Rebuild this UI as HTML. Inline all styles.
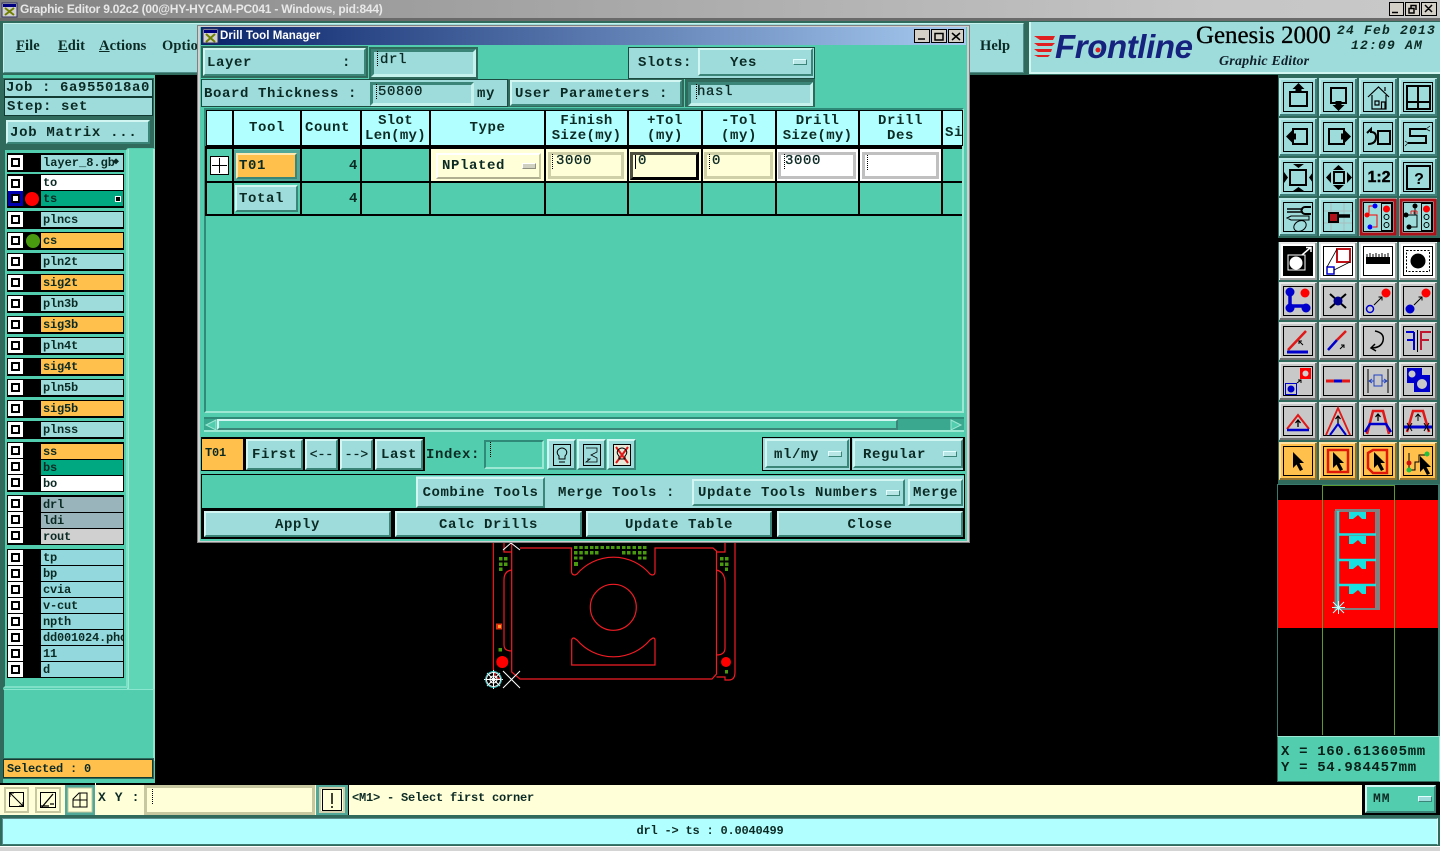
<!DOCTYPE html>
<html><head><meta charset="utf-8"><title>Graphic Editor</title>
<style>
html,body{margin:0;padding:0;width:1440px;height:851px;overflow:hidden;background:#000}
body{position:relative;font:bold 14px/1 "Liberation Mono",monospace;color:#0c2a24;letter-spacing:.6px}
div,span.a{position:absolute;box-sizing:border-box;white-space:pre}
.t{line-height:1}
.b{background:#9edcdc;border:2px solid;border-color:#d2f6f2 #3b8578 #3b8578 #d2f6f2;text-align:center}
.f{border:3px solid;border-color:#3b8578 #c6f2ee #c6f2ee #3b8578;background:#9edcdc;font-weight:normal;-webkit-text-stroke:.3px #0c2a24}
.p{background:#9edcdc;border:1px solid #1c4a40}
.l{background:#9edcdc;font-size:12px;letter-spacing:-.2px;height:15px;line-height:17px;left:41px;width:82px;padding-left:2px;overflow:hidden}
.o{background:#ffc04c}
.k{background:#000}
.ck{left:8px;width:15px;height:15px;background:#fff;border:3px solid #fff}
.ck:after{content:"";position:absolute;left:0;top:0;width:9px;height:9px;box-sizing:border-box;border:2px solid #000;background:#fff}
.m{width:14px;height:6px;background:#b8e6e6;border:1px solid;border-color:#e4ffff #3b8578 #3b8578 #e4ffff}
.c{width:1px;height:15px;border-left:1px dotted #000}
.h{background:#b2ffff;text-align:center;font-size:14px;line-height:15px;top:111px;height:34px;padding-top:3px}
.v{background:#000;width:2px}
.e{background:#ffffd8;border:3px solid #d0d0a8;padding-left:5px;line-height:12px;font-weight:normal;-webkit-text-stroke:.3px #0c2a24}
.mn{font:bold 14.5px/15px 'Liberation Serif',serif;letter-spacing:.1px;top:39px}
</style></head><body>

<!-- canvas board -->
<svg style="position:absolute;left:0;top:0" width="1440" height="851" viewBox="0 0 1440 851">
<g fill="none" stroke="#f01c24" stroke-width="1.200">
<path d="M520 548H571.5V572Q572 575 575 575L577 574A48 48 0 0 1 650 574L652 575Q655 575 655 572V548H713L716.5 551V674L712 679H520L511.7 672V543"/>
<path d="M511.7 570Q504 571 504 580V645Q504 651 511.7 651"/>
<path d="M716.5 570Q725 572 725 583V648Q725 655 716.5 655"/>
<path d="M493.3 543V668Q494 677 500 679"/>
<path d="M735 543V672Q735 680 729 680H725V677H716.5"/>
<path d="M504 543V552H511.7M725 543V552H716.5"/>
<circle cx="613.3" cy="607.3" r="23"/>
<path d="M571.7 665V640Q572 638 574 638L577 640A48 48 0 0 0 650 640L653 638Q655 638 655 640V665Z"/>
</g>
<circle cx="502.3" cy="662" r="6" fill="#f00"/><circle cx="726" cy="662" r="5" fill="#f00"/>
<rect x="496" y="623.500" width="6" height="6" fill="#e03010"/><rect x="498" y="625" width="3" height="3" fill="#ffa030"/>
<g fill="#4a9a10">
<path d="M574 546h3.500v3h-3.500zM579.300 546h3.500v3h-3.500zM584.600 546h3.500v3h-3.500zM590 546h3.500v3h-3.500zM595 546h3.500v3h-3.500zM600.500 546h3.500v3h-3.500zM606 546h3.500v3h-3.500zM611 546h3.500v3h-3.500zM616.500 546h3.500v3h-3.500zM622 546h3.500v3h-3.500zM627 546h3.500v3h-3.500zM632.500 546h3.500v3h-3.500zM638 546h3.500v3h-3.500zM643 546h3.500v3h-3.500z"/>
<path d="M574 551h3.500v3.500h-3.500zM579.300 551h3.500v3.500h-3.500zM584.600 551h3.500v3.500h-3.500zM590 551h3.500v3.500h-3.500zM595 551h3.500v3.500h-3.500zM622 551h3.500v3.500h-3.500zM627 551h3.500v3.500h-3.500zM632.500 551h3.500v3.500h-3.500zM638 551h3.500v3.500h-3.500zM643 551h3.500v3.500h-3.500z"/>
<path d="M574 556.500h3.500v3h-3.500zM579.300 556.500h3.500v3h-3.500zM638 556.500h3.500v3h-3.500zM643 556.500h3.500v3h-3.500zM574 562h4v4h-4z"/>
<path d="M499 557h3.500v3.500h-3.500zM504 557h3.500v3.500h-3.500zM499 562.500h3.500v3.500h-3.500zM504 562.500h3.500v3.500h-3.500zM499 567.500h3.500v3.500h-3.500zM498.500 648h3.500v3.500h-3.500z"/>
<path d="M720 557h3.500v3.500h-3.500zM725 557h3.500v3.500h-3.500zM720 562.500h3.500v3.500h-3.500zM725 562.500h3.500v3.500h-3.500zM725 567.500h3v3.500h-3zM725 670h3v3.500h-3z"/>
</g>
<g stroke="#fff" stroke-width="1" fill="none">
<circle cx="493.500" cy="679.500" r="7"/><circle cx="493.500" cy="679.500" r="3.500"/>
<path d="M484 679.500H503M493.500 670V689M487 673L500 686M500 673L487 686"/>
<path d="M503 671L520 688M520 671L503 688"/>
<path d="M503 550L511 543L520 550"/>
</g>
<circle cx="493.500" cy="679.500" r="8" fill="none" stroke="#30e0e0" stroke-width=".7"/>
</svg>

<!-- title bar -->
<div style="left:0;top:0;width:1440px;height:18px;background:linear-gradient(90deg,#808080,#9c9c9c 25%,#c6c6c6 85%,#c8c8c8)"></div>
<div style="left:0;top:18px;width:1440px;height:3px;background:#6a6a6a"></div>
<div style="left:20px;top:2px;font:bold 12px/14px 'Liberation Sans',sans-serif;letter-spacing:-.23px;color:#e8e8e8">Graphic Editor 9.02c2 (00@HY-HYCAM-PC041 - Windows, pid:844)</div>

<!-- menu bar -->
<div style="left:0;top:21px;width:1440px;height:54px;background:#2f6a5c"></div>
<div style="left:3px;top:23px;width:1021px;height:50px;background:#9edcdc;border:1px solid;border-color:#c6f2ee #4f8d88 #4f8d88 #c6f2ee"></div>
<div style="left:1029px;top:22px;width:411px;height:52px;background:#9edcdc;border-bottom:2px solid #d2f6f2;border-left:2px solid #d2f6f2"></div>
<div class="mn" style="left:16px"><u>F</u>ile</div>
<div class="mn" style="left:58px"><u>E</u>dit</div>
<div class="mn" style="left:99px"><u>A</u>ctions</div>
<div class="mn" style="left:162px">Optio</div>
<div class="mn" style="left:980px">Help</div>
<div style="left:1055px;top:27px;font:italic bold 33px/40px 'Liberation Sans',sans-serif;letter-spacing:-.4px;color:#16237e">Frontline</div>
<div style="left:1196px;top:22px;font:25px/28px 'Liberation Serif',serif;letter-spacing:-.05px;color:#000;-webkit-text-stroke:.3px #000">Genesis 2000</div>
<div style="left:1219px;top:54px;font:italic bold 14px/16px 'Liberation Serif',serif;letter-spacing:.2px;color:#10202a">Graphic Editor</div>
<div style="left:1337px;top:24px;font:italic bold 13px/14px 'Liberation Mono',monospace;letter-spacing:1.2px;color:#0c2a24">24 Feb 2013</div>
<div style="left:1351px;top:39px;font:italic bold 13px/14px 'Liberation Mono',monospace;letter-spacing:1.2px;color:#0c2a24">12:09 AM</div>

<!-- left panel -->
<div style="left:0;top:75px;width:155px;height:708px;background:#52cdae;border-left:3px solid #2f6a5c"></div>
<div style="left:3px;top:78px;width:151px;height:70px;background:#2f6a5c"></div>
<div style="left:4px;top:79px;width:149px;height:18px;background:#9edcdc;border:1px solid #123a32;padding-left:1px;line-height:17px">Job : 6a955018a0</div>
<div style="left:4px;top:97px;width:149px;height:19px;background:#9edcdc;border:1px solid #123a32;padding-left:2px;line-height:19px">Step: set</div>
<div class="b" style="left:6px;top:120px;width:144px;height:24px;text-align:left;padding-left:2px;line-height:22px;letter-spacing:.7px">Job Matrix ...</div>
<div style="left:127px;top:149px;width:28px;height:541px;background:#5fd6b6;border-left:2px solid #9ce8d4;border-right:2px solid #9ce8d4"></div>
<div style="left:3px;top:148px;width:125px;height:540px;background:#52cdae;border:2px solid #2f6a5c;border-top-width:2px;border-bottom-color:#7fe0c8;border-right-color:#7fe0c8"></div>
<div style="left:3px;top:689px;width:152px;height:72px;border-top:1px solid #8be6cf;border-right:2px solid #8be6cf;border-left:1px solid #2f6a5c"></div>
<div style="left:2px;top:758px;width:152px;height:21px;background:#2f6a5c"></div>
<div class="o" style="left:3px;top:759px;width:150px;height:19px;border:1px solid #123a32;padding-left:3px;font-size:12px;line-height:19px;letter-spacing:-.2px">Selected : 0</div>

<!-- layer rows blacks -->
<div class="k" style="left:7px;top:153px;width:117px;height:19px"></div>
<div class="k" style="left:7px;top:174px;width:117px;height:34px"></div>
<div class="k" style="left:7px;top:211px;width:117px;height:18px"></div>
<div class="k" style="left:7px;top:232px;width:117px;height:18px"></div>
<div class="k" style="left:7px;top:253px;width:117px;height:18px"></div>
<div class="k" style="left:7px;top:274px;width:117px;height:18px"></div>
<div class="k" style="left:7px;top:295px;width:117px;height:18px"></div>
<div class="k" style="left:7px;top:316px;width:117px;height:18px"></div>
<div class="k" style="left:7px;top:337px;width:117px;height:18px"></div>
<div class="k" style="left:7px;top:358px;width:117px;height:18px"></div>
<div class="k" style="left:7px;top:379px;width:117px;height:18px"></div>
<div class="k" style="left:7px;top:400px;width:117px;height:18px"></div>
<div class="k" style="left:7px;top:421px;width:117px;height:18px"></div>
<div class="k" style="left:7px;top:442px;width:117px;height:50px"></div>
<div class="k" style="left:7px;top:495px;width:117px;height:50px"></div>
<div class="k" style="left:7px;top:549px;width:117px;height:129px"></div>

<div class="ck" style="top:155px"></div><div class="l" style="top:155px;left:41px;width:82px;padding-right:10px;letter-spacing:0">layer_8.gb</div>
<div style="left:113px;top:158px;font-size:10px;line-height:10px;letter-spacing:0">&#9670;</div>
<div class="ck" style="top:176px"></div><div class="l" style="top:175px;background:#fff">to</div>
<div style="left:8px;top:191px;width:15px;height:15px;background:#0000b0"></div><div style="left:11px;top:194px;width:9px;height:9px;background:#fff;border:2px solid #000"></div>
<div style="left:25px;top:192px;width:14px;height:14px;border-radius:50%;background:#f00"></div>
<div class="l" style="top:191px;background:#00a882">ts</div>
<div style="left:115px;top:196px;width:6px;height:6px;border:1px solid #fff;background:#000"></div>
<div class="ck" style="top:212px"></div><div class="l" style="top:212px">plncs</div>
<div class="ck" style="top:233px"></div><div style="left:26px;top:234px;width:14px;height:14px;border-radius:50%;background:#4a9a10"></div><div class="l o" style="top:233px">cs</div>
<div class="ck" style="top:254px"></div><div class="l" style="top:254px">pln2t</div>
<div class="ck" style="top:275px"></div><div class="l o" style="top:275px">sig2t</div>
<div class="ck" style="top:296px"></div><div class="l" style="top:296px">pln3b</div>
<div class="ck" style="top:317px"></div><div class="l o" style="top:317px">sig3b</div>
<div class="ck" style="top:338px"></div><div class="l" style="top:338px">pln4t</div>
<div class="ck" style="top:359px"></div><div class="l o" style="top:359px">sig4t</div>
<div class="ck" style="top:380px"></div><div class="l" style="top:380px">pln5b</div>
<div class="ck" style="top:401px"></div><div class="l o" style="top:401px">sig5b</div>
<div class="ck" style="top:422px"></div><div class="l" style="top:422px">plnss</div>
<div class="ck" style="top:443px"></div><div class="l o" style="top:444px">ss</div>
<div class="ck" style="top:459px"></div><div class="l" style="top:460px;background:#00a882">bs</div>
<div class="ck" style="top:475px"></div><div class="l" style="top:476px;background:#fff">bo</div>
<div class="ck" style="top:496px"></div><div class="l" style="top:497px;background:#9ab4bc">drl</div>
<div class="ck" style="top:512px"></div><div class="l" style="top:513px;background:#9ab4bc">ldi</div>
<div class="ck" style="top:528px"></div><div class="l" style="top:529px;background:#d0d0d0">rout</div>
<div class="ck" style="top:550px"></div><div class="l" style="top:550px;background:#92d8dc">tp</div>
<div class="ck" style="top:566px"></div><div class="l" style="top:566px;background:#92d8dc">bp</div>
<div class="ck" style="top:582px"></div><div class="l" style="top:582px;background:#92d8dc">cvia</div>
<div class="ck" style="top:598px"></div><div class="l" style="top:598px;background:#92d8dc">v-cut</div>
<div class="ck" style="top:614px"></div><div class="l" style="top:614px;background:#92d8dc">npth</div>
<div class="ck" style="top:630px"></div><div class="l" style="top:630px;background:#92d8dc">dd001024.pho</div>
<div class="ck" style="top:646px"></div><div class="l" style="top:646px;background:#92d8dc">11</div>
<div class="ck" style="top:662px"></div><div class="l" style="top:662px;background:#92d8dc">d</div>

<!-- right panel -->
<div style="left:1277px;top:75px;width:163px;height:409px;background:#2f6a5c;border-left:1px solid #000"></div>
<div style="left:1277px;top:238px;width:163px;height:4px;background:#000"></div>
<div style="left:1277px;top:484px;width:163px;height:252px;background:#000;border:1px solid #3a7a6c;border-width:1px 2px 0 1px"></div>
<div style="left:1278px;top:500px;width:160px;height:128px;background:#f00"></div>
<div style="left:1277px;top:736px;width:163px;height:46px;background:#52cdae;border:1px solid;border-color:#9ce8d4 #9ce8d4 #2f6a5c #2f6a5c"></div>
<div style="left:1281px;top:745px;line-height:15px;font-size:14px;letter-spacing:.65px;color:#082018">X = 160.613605mm</div>
<div style="left:1281px;top:761px;line-height:15px;font-size:14px;letter-spacing:.65px;color:#082018">Y = 54.984457mm</div>

<!-- bottom -->
<div style="left:0;top:783px;width:1440px;height:68px;background:#000"></div>
<div style="left:0;top:785px;width:1362px;height:30px;background:#ffffd8"></div>
<div style="left:98px;top:790px;line-height:16px;font-size:13px">X Y :</div>
<div style="left:144px;top:785px;width:171px;height:30px;border:3px solid #c8c8a0;background:#ffffd8"></div>
<div class="c" style="left:152px;top:789px"></div>
<div style="left:316px;top:785px;width:32px;height:30px;background:#52a898"></div>
<div style="left:319px;top:787px;width:26px;height:26px;background:#ffffd8;border:2px solid #d0d0b0"></div>
<div style="left:348px;top:785px;width:1014px;height:30px;background:#ffffd8;border-left:1px solid #000"></div>
<div style="left:352px;top:791px;line-height:14px;font-size:12px;letter-spacing:-.2px">&lt;M1&gt; - Select first corner</div>
<div class="b" style="left:1365px;top:785px;width:71px;height:28px;background:#52cdae;text-align:left;padding-left:6px;font-size:13px;letter-spacing:1px;line-height:24px">MM</div>
<div class="m" style="left:1418px;top:796px;background:#9edcdc"></div>
<div style="left:0;top:815px;width:1440px;height:32px;background:#2f6a5c"></div>
<div style="left:2px;top:818px;width:1436px;height:27px;background:#b2ffff;border:1px solid;border-color:#5f8d8d #e8ffff #3b7a70 #5f8d8d;text-align:center;font-size:12px;line-height:25px;letter-spacing:-.2px;padding-right:20px">drl -&gt; ts : 0.0040499</div>
<div style="left:0;top:846px;width:1440px;height:5px;background:#d4d4d4;border-top:1px solid #fff"></div>

<!-- dialog -->
<div style="left:197px;top:25px;width:773px;height:518px;background:#d0d0d0;border:1px solid #808080"></div>
<div style="left:200px;top:27px;width:767px;height:514px;background:#52cdae"></div>
<div style="left:201px;top:27px;width:765px;height:18px;background:linear-gradient(90deg,#0a246a,#a6caf0)"></div>
<div style="left:220px;top:29px;font:bold 11.5px/14px 'Liberation Sans',sans-serif;letter-spacing:.05px;color:#fff">Drill Tool Manager</div>

<div style="left:201px;top:46px;width:167px;height:32px;background:#2f6a5c"></div>
<div class="b" style="left:203px;top:48px;width:163px;height:28px;text-align:left;padding-left:2px;line-height:27px">Layer          :</div>
<div style="left:369px;top:47px;width:109px;height:32px;background:#2f6a5c"></div>
<div class="f" style="left:371px;top:49px;width:105px;height:28px;padding-left:6px;line-height:16px">drl</div>
<div class="c" style="left:377px;top:51px"></div>

<div style="left:628px;top:47px;width:187px;height:32px;background:#9edcdc;border:1px solid #1c4a40"></div>
<div style="left:638px;top:55px;line-height:15px;padding-top:1px">Slots:</div>
<div class="b" style="left:698px;top:48px;width:115px;height:28px;line-height:27px;padding-right:24px">Yes</div>
<div class="m" style="left:793px;top:59px"></div>

<div style="left:201px;top:79px;width:307px;height:28px;background:#9edcdc;border:1px solid #1c4a40"></div>
<div style="left:204px;top:87px;line-height:15px">Board Thickness :</div>
<div class="f" style="left:370px;top:82px;width:104px;height:24px;padding-left:5px;line-height:14px">50800</div>
<div class="c" style="left:376px;top:84px"></div>
<div style="left:477px;top:87px;line-height:15px">my</div>
<div style="left:508px;top:79px;width:176px;height:28px;background:#2f6a5c"></div>
<div class="b" style="left:510px;top:80px;width:172px;height:26px;line-height:24px;text-align:left;padding-left:3px">User Parameters :</div>
<div style="left:685px;top:79px;width:130px;height:28px;background:#2f6a5c"></div>
<div class="f" style="left:688px;top:82px;width:125px;height:24px;padding-left:6px;line-height:14px">hasl</div>
<div class="c" style="left:696px;top:84px"></div>

<!-- table -->
<div style="left:204px;top:108px;width:760px;height:305px;border:2px solid;border-color:#2f8a78 #9ce8d4 #9ce8d4 #2f8a78"></div>
<div class="k" style="left:206px;top:110px;width:757px;height:36px"></div>
<div class="h" style="left:207px;width:25px"></div>
<div class="h" style="left:234px;width:66px;line-height:28px">Tool</div>
<div class="h" style="left:302px;width:58px;line-height:28px;text-align:left;padding-left:3px">Count</div>
<div class="h" style="left:362px;width:67px;letter-spacing:.3px">Slot<br>Len(my)</div>
<div class="h" style="left:431px;width:113px;line-height:28px">Type</div>
<div class="h" style="left:546px;width:81px;letter-spacing:.3px">Finish<br>Size(my)</div>
<div class="h" style="left:629px;width:72px">+Tol<br>(my)</div>
<div class="h" style="left:703px;width:72px">-Tol<br>(my)</div>
<div class="h" style="left:777px;width:81px;letter-spacing:.3px">Drill<br>Size(my)</div>
<div class="h" style="left:860px;width:81px">Drill<br>Des</div>
<div class="h" style="left:943px;width:19px;text-align:left;padding-left:2px;line-height:28px;padding-top:8px;overflow:hidden">Si</div>
<div class="k" style="left:205px;top:146px;width:757px;height:3px"></div>
<div class="k" style="left:205px;top:181px;width:757px;height:2px"></div>
<div class="k" style="left:205px;top:214px;width:757px;height:2px"></div>
<div class="v" style="left:205px;top:149px;height:66px"></div>
<div class="v" style="left:232px;top:149px;height:66px"></div>
<div class="v" style="left:300px;top:149px;height:66px"></div>
<div class="v" style="left:360px;top:149px;height:66px"></div>
<div class="v" style="left:429px;top:149px;height:66px"></div>
<div class="v" style="left:544px;top:149px;height:66px"></div>
<div class="v" style="left:627px;top:149px;height:66px"></div>
<div class="v" style="left:701px;top:149px;height:66px"></div>
<div class="v" style="left:775px;top:149px;height:66px"></div>
<div class="v" style="left:858px;top:149px;height:66px"></div>
<div class="v" style="left:941px;top:149px;height:66px"></div>

<div style="left:210px;top:156px;width:19px;height:19px;background:#fff;border:1px solid #000"></div>
<div style="left:219px;top:158px;width:1px;height:15px;background:#000"></div>
<div style="left:212px;top:165px;width:15px;height:1px;background:#000"></div>
<div style="left:234px;top:150px;width:66px;height:31px;background:#52a898"></div>
<div class="b o" style="left:236px;top:153px;width:61px;height:26px;text-align:left;padding-left:1px;line-height:22px;border-color:#ffe8b0 #3b8578 #3b8578 #ffe8b0">T01</div>
<div class="b" style="left:235px;top:185px;width:63px;height:27px;text-align:left;padding-left:2px;line-height:25px">Total</div>
<div style="left:340px;top:159px;width:18px;line-height:15px;text-align:right">4</div>
<div style="left:340px;top:192px;width:18px;line-height:15px;text-align:right">4</div>

<div style="left:431px;top:149px;width:113px;height:32px;background:#ffffd8"></div>
<div style="left:436px;top:153px;width:105px;height:26px;background:#ffffd8;border:2px solid;border-color:#fff #c8c8a0 #b0b090 #fff;padding-left:4px;line-height:22px">NPlated</div>
<div class="m" style="left:522px;top:163px;background:#d0d0c0;border-color:#fff #909080 #909080 #fff"></div>

<div style="left:546px;top:149px;width:81px;height:32px;background:#ffffd8"></div>
<div class="e" style="left:548px;top:152px;width:76px;height:27px">3000</div>
<div class="c" style="left:552px;top:154px"></div>
<div style="left:629px;top:149px;width:72px;height:32px;background:#ffffd8"></div>
<div class="e" style="left:630px;top:152px;width:69px;height:28px;border-color:#000;border-top-color:#505040;border-left-color:#505040;padding-left:5px">0</div>
<div style="left:635px;top:155px;width:1px;height:14px;background:#000"></div>
<div style="left:703px;top:149px;width:72px;height:32px;background:#ffffd8"></div>
<div class="e" style="left:704px;top:152px;width:69px;height:27px">0</div>
<div class="c" style="left:709px;top:154px"></div>
<div style="left:777px;top:149px;width:81px;height:32px;background:#fff"></div>
<div class="e" style="left:778px;top:152px;width:78px;height:27px;background:#fff;border-color:#c0c0c0;padding-left:4px">3000</div>
<div class="c" style="left:784px;top:154px"></div>
<div style="left:860px;top:149px;width:81px;height:32px;background:#fff"></div>
<div style="left:862px;top:152px;width:77px;height:27px;background:#fff;border:3px solid #c0c0c0"></div>
<div class="c" style="left:867px;top:155px"></div>

<!-- scrollbar -->
<div style="left:204px;top:417px;width:760px;height:15px;background:#3aa88e;border-top:2px solid #2f8a78;border-bottom:2px solid #9ce8d4"></div>
<div class="b" style="left:217px;top:419px;width:681px;height:11px;background:#52cdae"></div>
<svg style="position:absolute;left:204px;top:418px" width="760" height="14"><path d="M12 2L2 7L12 12Z" fill="#52cdae" stroke="#9ce8d4"/><path d="M747 2L757 7L747 12Z" fill="#52cdae" stroke="#9ce8d4"/></svg>

<!-- row 1 controls -->
<div class="k" style="left:201px;top:437px;width:224px;height:34px"></div>
<div class="o" style="left:202px;top:439px;width:41px;height:31px;font-size:12px;line-height:29px;padding-left:3px;letter-spacing:-.2px">T01</div>
<div class="b" style="left:246px;top:439px;width:57px;height:31px;line-height:29px">First</div>
<div class="b" style="left:305px;top:439px;width:33px;height:31px;line-height:28px;font-size:13px;letter-spacing:0;font-weight:normal;-webkit-text-stroke:.3px #0c2a24">&lt;--</div>
<div class="b" style="left:340px;top:439px;width:33px;height:31px;line-height:28px;font-size:13px;letter-spacing:0;font-weight:normal;-webkit-text-stroke:.3px #0c2a24">--&gt;</div>
<div class="b" style="left:375px;top:439px;width:48px;height:31px;line-height:29px">Last</div>
<div style="left:426px;top:448px;line-height:15px">Index:</div>
<div style="left:484px;top:440px;width:60px;height:29px;border:2px solid;border-color:#2f8a78 #9ce8d4 #9ce8d4 #2f8a78"></div>
<div class="c" style="left:490px;top:442px"></div>
<div class="b" style="left:547px;top:439px;width:29px;height:31px"></div>
<div class="b" style="left:577px;top:439px;width:29px;height:31px"></div>
<div class="b" style="left:607px;top:439px;width:29px;height:31px"></div>
<div class="k" style="left:762px;top:437px;width:203px;height:34px"></div>
<div style="left:763px;top:438px;width:200px;height:32px;background:#9edcdc"></div>
<div class="b" style="left:765px;top:439px;width:84px;height:29px;line-height:28px;text-align:left;padding-left:7px">ml/my</div>
<div class="m" style="left:828px;top:451px"></div>
<div class="k" style="left:850px;top:438px;width:2px;height:32px"></div>
<div class="b" style="left:853px;top:439px;width:110px;height:29px;line-height:28px;text-align:left;padding-left:8px">Regular</div>
<div class="m" style="left:943px;top:451px"></div>

<!-- row 2 -->
<div class="k" style="left:201px;top:474px;width:764px;height:65px"></div>
<div style="left:202px;top:475px;width:762px;height:33px;background:#52cdae"></div>
<div style="left:416px;top:476px;width:548px;height:32px;background:#9edcdc"></div>
<div class="b" style="left:416px;top:477px;width:129px;height:31px;line-height:29px;letter-spacing:.5px;padding:0">Combine Tools</div>
<div style="left:558px;top:486px;line-height:15px">Merge Tools :</div>
<div class="b" style="left:692px;top:479px;width:213px;height:27px;line-height:25px;text-align:left;padding-left:4px">Update Tools Numbers</div>
<div class="m" style="left:886px;top:490px"></div>
<div class="b" style="left:908px;top:479px;width:55px;height:27px;line-height:25px;padding:0">Merge</div>

<div class="b" style="left:204px;top:511px;width:187px;height:26px;line-height:24px">Apply</div>
<div class="b" style="left:395px;top:511px;width:187px;height:26px;line-height:24px">Calc Drills</div>
<div class="b" style="left:586px;top:511px;width:186px;height:26px;line-height:24px">Update Table</div>
<div class="b" style="left:777px;top:511px;width:186px;height:26px;line-height:24px">Close</div>

<!-- overlay icons -->
<svg style="position:absolute;left:0;top:0" width="1440" height="851" viewBox="0 0 1440 851">
<defs>
<g id="bT"><rect width="38" height="38" fill="#9edcdc"/><path d="M1 37V1H37" fill="none" stroke="#bfeaea" stroke-width="2"/><path d="M1 37H37V1" fill="none" stroke="#3f7f7a" stroke-width="2"/><rect x="4.500" y="4.500" width="29" height="29" fill="none" stroke="#000"/></g>
<g id="bG"><rect width="38" height="38" fill="#c8c8c8"/><path d="M1 37V1H37" fill="none" stroke="#e6e6e6" stroke-width="2"/><path d="M1 37H37V1" fill="none" stroke="#707070" stroke-width="2"/><rect x="4.500" y="4.500" width="29" height="29" fill="none" stroke="#000"/></g>
<g id="bO"><rect width="38" height="38" fill="#ffc04c"/><path d="M1 37V1H37" fill="none" stroke="#ffe0a0" stroke-width="2"/><path d="M1 37H37V1" fill="none" stroke="#907030" stroke-width="2"/><rect x="4.500" y="4.500" width="29" height="29" fill="none" stroke="#000"/></g>
<g id="bW"><rect width="38" height="38" fill="#fff"/><path d="M1 37V1H37" fill="none" stroke="#e8e8e8" stroke-width="2"/><path d="M1 37H37V1" fill="none" stroke="#a0a0a0" stroke-width="2"/><rect x="4.500" y="4.500" width="29" height="29" fill="none" stroke="#000"/></g>
<path id="cur" d="M-5-8V8L-1.500 4.500L2 11L5 9.500L1.500 3H6Z" fill="#000"/>
</defs>

<!-- title icons -->
<g><rect x="2" y="3" width="15" height="14" fill="#d0d0d0" stroke="#303060"/><rect x="3" y="4" width="13" height="3" fill="#000080"/><path d="M5 8L14 15M14 8L5 15" stroke="#708000" stroke-width="2"/></g>
<g transform="translate(203 29)"><rect width="15" height="14" fill="#d0d0d0" stroke="#303060"/><rect x="1" y="1" width="13" height="3" fill="#000080"/><path d="M3 5L12 13M12 5L3 13" stroke="#708000" stroke-width="2"/></g>
<g stroke="#000" fill="#d4d0c8">
<rect x="1389.500" y="2.500" width="14" height="13"/><rect x="1405.500" y="2.500" width="14" height="13"/><rect x="1421.500" y="2.500" width="15" height="13"/>
<rect x="914.500" y="29.500" width="15" height="13"/><rect x="931.500" y="29.500" width="15" height="13"/><rect x="948.500" y="29.500" width="15" height="13"/>
</g>
<path d="M1392 12.500H1398M1409 8.500H1414V13H1409ZM1411 8V5.500H1416V10M1425 5L1432 12M1432 5L1425 12" stroke="#000" stroke-width="1.500" fill="none"/>
<path d="M918 39H925M935 33.500H943V40H935ZM952 33L960 40M960 33L952 40" stroke="#000" stroke-width="1.500" fill="none"/>

<!-- logo pieces -->
<path d="M1034 36H1055L1053 40H1040ZM1034 43H1055L1052 46H1038ZM1034 49H1052L1051 52H1038ZM1034 55H1050L1048 57H1038Z" fill="#e02020"/>
<circle cx="1098" cy="50" r="2.500" fill="#e02020"/>

<!-- minimap -->
<path d="M1322.500 485V735M1394.500 485V735M1322 485.500H1395" stroke="#5a9a30" fill="none"/>
<g fill="none" stroke="#808080"><path d="M1335.500 511V609H1380" stroke-width="2"/><path d="M1377.500 511V610" stroke-width="5"/><path d="M1335 510.500H1380" stroke-width="3"/></g>
<g fill="none" stroke="#18e0e0" stroke-width="2.500"><path d="M1338 511V608M1337 534.500H1376M1337 560H1376M1337 585H1376"/></g>
<g fill="#18e0e0"><path d="M1349 512H1366V519H1362L1358 515L1353 519H1349ZM1349 536H1366V544H1362L1358 540L1353 544H1349ZM1349 561H1366V569H1362L1358 565L1353 569H1349ZM1349 586H1366V594H1362L1358 590L1353 594H1349Z"/></g>
<path d="M1333 602L1344 613M1344 602L1333 613M1338.500 601V614M1332 607.500H1345" stroke="#c0ffff" fill="none"/>

<!-- toolbar top -->
<g transform="translate(1279 78)"><use href="#bT"/><rect x="11" y="14" width="17" height="14" fill="none" stroke="#000" stroke-width="2"/><path d="M19.500 5L25.500 11H22.500V15H16.500V11H13.500Z"/></g>
<g transform="translate(1319 78)"><use href="#bT"/><rect x="12" y="10" width="15" height="15" fill="none" stroke="#000" stroke-width="2"/><path d="M19.500 33L13.500 27H16.500V23H22.500V27H25.500Z"/></g>
<g transform="translate(1359 78)"><use href="#bT"/><path d="M9 19L19.500 9L30 19M13 17V31H27V17M16 23H20V27H16ZM22.500 24H26V31H22.500ZM26 9V13" fill="none" stroke="#000" stroke-width="1.200"/></g>
<g transform="translate(1399 78)"><use href="#bT"/><path d="M8 8H31V31H8ZM19 8V31M8 24H31" fill="none" stroke="#000" stroke-width="2"/></g>

<g transform="translate(1279 118)"><use href="#bT"/><rect x="14" y="11" width="14" height="15" fill="none" stroke="#000" stroke-width="2"/><path d="M7 18.500L13 12.500V15.500H17V21.500H13V24.500Z"/></g>
<g transform="translate(1319 118)"><use href="#bT"/><rect x="10" y="11" width="15" height="15" fill="none" stroke="#000" stroke-width="2"/><path d="M32 18.500L26 12.500V15.500H22V21.500H26V24.500Z"/></g>
<g transform="translate(1359 118)"><use href="#bT"/><rect x="19" y="13" width="12" height="13" fill="none" stroke="#000" stroke-width="2"/><path d="M8 15L12 11V14Q17 14 17 19Q17 26 9 26" fill="none" stroke="#000" stroke-width="2"/></g>
<g transform="translate(1399 118)"><use href="#bT"/><path d="M27 11H11V18H27V25H9" fill="none" stroke="#000" stroke-width="2"/><path d="M27 11L31 8M27 11L31 13M9 25L6 23M9 25L6 28" fill="none" stroke="#000" stroke-width=".7"/></g>

<g transform="translate(1279 158)"><use href="#bT"/><rect x="11" y="12" width="16" height="15" fill="none" stroke="#000" stroke-width="2"/><path d="M14 6H25L19.500 10ZM14 33H25L19.500 29ZM5 14V25L9 19.500ZM34 14V25L30 19.500Z"/></g>
<g transform="translate(1319 158)"><use href="#bT"/><rect x="15" y="14" width="10" height="11" fill="none" stroke="#000" stroke-width="2"/><path d="M19.500 7L25 12H14ZM19.500 32L25 27H14ZM7 19.500L12 14V25ZM33 19.500L28 14V25Z"/></g>
<g transform="translate(1359 158)"><use href="#bT"/><text x="20" y="24" text-anchor="middle" font-family="Liberation Sans,sans-serif" font-size="16" letter-spacing="0" fill="#000" stroke="#000" stroke-width=".4">1:2</text></g>
<g transform="translate(1399 158)"><use href="#bT"/><rect x="8" y="8" width="23" height="23" fill="none" stroke="#000" stroke-width="2"/><text x="20" y="26" text-anchor="middle" font-family="Liberation Sans,sans-serif" font-weight="bold" font-size="16" letter-spacing="0" fill="#000">?</text></g>

<g transform="translate(1279 198)"><use href="#bT"/><path d="M8 11H24M8 14H24" stroke="#000" stroke-width="1.500"/><path d="M32 9H26A3.500 3.500 0 0 0 26 16H32" fill="none" stroke="#000" stroke-width="2"/><path d="M8 20L12 18H30V22H12Z" fill="none" stroke="#000"/><ellipse cx="21" cy="28" rx="6.500" ry="5" fill="none" stroke="#000" transform="rotate(-30 21 28)"/></g>
<g transform="translate(1319 198)"><use href="#bT"/><path d="M5 13H33M5 25H33M12 5V33M25 5V33" stroke="#a8bcbc"/><rect x="9" y="14" width="11" height="11" fill="#000"/><rect x="11" y="16" width="7" height="7" fill="#b01018"/><path d="M20 18H31" stroke="#000" stroke-width="3.500"/></g>
<g transform="translate(1359 198)"><use href="#bT"/><rect x="2" y="2" width="34" height="34" fill="none" stroke="#b01018" stroke-width="3"/><rect x="22.500" y="5.500" width="10" height="27" fill="none" stroke="#000"/><circle cx="27.500" cy="11" r="3.500" fill="#f00"/><circle cx="27.500" cy="19" r="2.500" fill="none" stroke="#000"/><circle cx="27.500" cy="27" r="2.500" fill="none" stroke="#000"/><path d="M10 17V8H16" fill="none" stroke="#f00"/><path d="M10 17H18V29H14" fill="none" stroke="#f00"/><circle cx="8" cy="17" r="2.500" fill="#f00"/><circle cx="16" cy="8" r="2.500" fill="#00f"/><circle cx="11" cy="29" r="2.500" fill="#00f"/></g>
<g transform="translate(1399 198)"><use href="#bT"/><rect x="2" y="2" width="34" height="34" fill="none" stroke="#b01018" stroke-width="3"/><rect x="22.500" y="5.500" width="10" height="27" fill="none" stroke="#000"/><circle cx="27.500" cy="11" r="3.500" fill="#f00"/><circle cx="27.500" cy="19" r="2.500" fill="none" stroke="#000"/><circle cx="27.500" cy="27" r="2.500" fill="none" stroke="#000"/><path d="M9 17H18V29H12M16 8V17" fill="none" stroke="#000"/><circle cx="7" cy="17" r="2.500"/><circle cx="16" cy="8" r="2.500"/><circle cx="10" cy="29" r="2.500"/><path d="M12 16V13M15 16V13M18 16V13M12 13H18" stroke="#e02020" fill="none"/></g>

<!-- toolbar second -->
<g transform="translate(1279 242)"><use href="#bW"/><rect x="5" y="5" width="28" height="28" fill="#000"/><rect x="9" y="13" width="17" height="15" fill="none" stroke="#fff"/><circle cx="17" cy="21" r="6.500" fill="#fff"/><path d="M23 13L31 6M27 5.500H32V10" fill="none" stroke="#fff" stroke-width="1.500"/></g>
<g transform="translate(1319 242)"><use href="#bW"/><rect x="8" y="25" width="7" height="7" fill="none" stroke="#00c" stroke-width="1.500"/><rect x="18" y="7" width="13" height="13" fill="none" stroke="#c01018" stroke-width="2"/><path d="M8 25L18 7M15 28L31 20" fill="none" stroke="#000" stroke-width=".8"/></g>
<g transform="translate(1359 242)"><use href="#bW"/><rect x="7" y="15" width="24" height="7" fill="#000"/><path d="M8 12V15M11 11V15M14 12V15M17 11V15M20 12V15M23 11V15M26 12V15M29 11V15" stroke="#000"/></g>
<g transform="translate(1399 242)"><use href="#bW"/><rect x="7.500" y="8.500" width="23" height="21" fill="none" stroke="#000" stroke-dasharray="2 1.500"/><circle cx="19" cy="19" r="7.500"/></g>

<g transform="translate(1279 282)"><use href="#bG"/><path d="M11 11V24H28" fill="none" stroke="#00c" stroke-width="3.500"/><circle cx="11" cy="10" r="4.500" fill="#00c"/><circle cx="11" cy="26" r="4.500" fill="#00c"/><circle cx="27" cy="26" r="4.500" fill="#00c"/><circle cx="26" cy="11" r="4.500" fill="#f00"/></g>
<g transform="translate(1319 282)"><use href="#bG"/><path d="M11 12L27 26M27 12L11 26" stroke="#000" stroke-width="2"/><circle cx="19" cy="19" r="4.500" fill="#00008c"/></g>
<g transform="translate(1359 282)"><use href="#bG"/><circle cx="11" cy="27" r="3.500" fill="none" stroke="#00c" stroke-width="1.500"/><circle cx="27" cy="11" r="4.500" fill="#f00"/><path d="M15 23L23 15M19.500 15H23V18.500" fill="none" stroke="#000"/></g>
<g transform="translate(1399 282)"><use href="#bG"/><circle cx="11" cy="27" r="4.500" fill="#00c"/><circle cx="27" cy="11" r="4.500" fill="#f00"/><path d="M15 23L23 15M19.500 15H23V18.500" fill="none" stroke="#000"/></g>

<g transform="translate(1279 322)"><use href="#bG"/><path d="M9 28L27 9" stroke="#e01818" stroke-width="2.500"/><path d="M8 30H29" stroke="#00c" stroke-width="3"/><path d="M24 23L20 19M20 22V19H23" stroke="#000" fill="none"/></g>
<g transform="translate(1319 322)"><use href="#bG"/><path d="M9 28L18 18" stroke="#00c" stroke-width="2.500"/><path d="M18 18L27 9" stroke="#e01818" stroke-width="2.500"/><path d="M21 27L25 23M22 23H25V26" stroke="#000" fill="none"/></g>
<g transform="translate(1359 322)"><use href="#bG"/><path d="M16 9Q26 11 24 19Q22 26 12 26M16 22L12 26L17 29" fill="none" stroke="#000" stroke-width="1.500"/></g>
<g transform="translate(1399 322)"><use href="#bG"/><path d="M18.500 8V30" stroke="#000"/><path d="M15 10H7M15 10V28M15 18H8" fill="none" stroke="#00c" stroke-width="2"/><path d="M22 28V10H32M22 18H30" fill="none" stroke="#c01830" stroke-width="2"/></g>

<g transform="translate(1279 362)"><use href="#bG"/><rect x="21" y="6" width="11" height="11" fill="#f00"/><circle cx="26.500" cy="11.500" r="3" fill="#d0d0d0"/><rect x="6.500" y="21.500" width="11" height="11" fill="none" stroke="#00c"/><circle cx="12" cy="27" r="3.500" fill="#00c"/><path d="M18 21L22 18M19 18H22V21" stroke="#000" fill="none"/></g>
<g transform="translate(1319 362)"><use href="#bG"/><path d="M7 19H31" stroke="#e01818" stroke-width="3"/><path d="M15 19H23" stroke="#00c" stroke-width="3"/></g>
<g transform="translate(1359 362)"><use href="#bG"/><path d="M9 7V31M29 7V31" stroke="#000"/><rect x="15" y="13" width="8" height="11" fill="none" stroke="#2040c0"/><path d="M10 19H15M23 19H28M10 19L13 17M10 19L13 21M28 19L25 17M28 19L25 21" stroke="#2040c0" fill="none"/></g>
<g transform="translate(1399 362)"><use href="#bG"/><path d="M8 6H23V13H31V30H15V21H8Z" fill="#00c"/><circle cx="13" cy="12" r="3.500" fill="#c8c8c8"/><circle cx="23" cy="22" r="5" fill="#c8c8c8"/></g>

<g transform="translate(1279 402)"><use href="#bG"/><path d="M8 27L19 13L30 27" fill="none" stroke="#e01818" stroke-width="2"/><path d="M8 28H30" stroke="#00c" stroke-width="2.500"/><path d="M19 25V19M16.500 21L19 18L21.500 21" stroke="#000" fill="none" stroke-width="1.300"/></g>
<g transform="translate(1319 402)"><use href="#bG"/><path d="M7 33L19 6L31 33" fill="none" stroke="#e01818" stroke-width="1.800"/><path d="M11 33L19 22L27 33" fill="none" stroke="#00c" stroke-width="2"/><path d="M19 21V15M16.500 17L19 14L21.500 17" stroke="#000" fill="none" stroke-width="1.300"/></g>
<g transform="translate(1359 402)"><use href="#bG"/><path d="M8 32L14 9H24L30 32" fill="none" stroke="#e01818" stroke-width="2.500"/><path d="M6 30L11 22H27L32 30" fill="none" stroke="#00c" stroke-width="2.500"/><path d="M19 19V13M16.500 15L19 12L21.500 15" stroke="#000" fill="none" stroke-width="1.300"/></g>
<g transform="translate(1399 402)"><use href="#bG"/><path d="M8 30L14 9H24L30 30" fill="none" stroke="#e01818" stroke-width="2.500"/><path d="M5 25H33" stroke="#00c" stroke-width="3"/><path d="M19 19V13M16.500 15L19 12L21.500 15M8 21L13 29M13 21L8 29M25 21L30 29M30 21L25 29" stroke="#000" fill="none"/></g>

<g transform="translate(1279 442)"><use href="#bO"/><use href="#cur" x="19" y="18"/></g>
<g transform="translate(1319 442)"><use href="#bO"/><rect x="9" y="8" width="20" height="22" fill="none" stroke="#e01808" stroke-width="2.500"/><use href="#cur" x="19" y="18"/></g>
<g transform="translate(1359 442)"><use href="#bO"/><path d="M9 11L14 8H28V31H14L9 26Z" fill="none" stroke="#e01808" stroke-width="2.500"/><use href="#cur" x="20" y="18"/></g>
<g transform="translate(1399 442)"><use href="#bO"/><path d="M10 11V19M10 19V28H16V20H20V13H27" fill="none" stroke="#000"/><circle cx="10" cy="21" r="2.500" fill="#d01010"/><circle cx="10" cy="28" r="2.500" fill="#20c040"/><circle cx="28" cy="12" r="2.500" fill="#20c040"/><use href="#cur" x="26" y="22"/></g>

<!-- dialog small icons -->
<g transform="translate(553 444)"><rect x=".5" y=".5" width="17" height="21" fill="none" stroke="#000"/><path d="M6 15V12Q3 9 5 6Q9 2 13 6Q15 9 12 12V15ZM6 18H12" fill="none" stroke="#000"/></g>
<g transform="translate(583 444)"><rect x=".5" y=".5" width="17" height="21" fill="none" stroke="#000"/><path d="M3 4H14V8L8 11L14 14V18H3L7 15H4" fill="none" stroke="#000" stroke-width=".8"/></g>
<g transform="translate(613 444)"><rect x=".5" y=".5" width="17" height="21" fill="#e8e8d8" stroke="#000"/><path d="M3 3L15 19M15 3L3 19" stroke="#e01818" stroke-width="2"/><path d="M6 15V12Q3 9 5 6Q9 2 13 6Q15 9 12 12V15Z" fill="none" stroke="#000"/></g>

<!-- bottom icons -->
<g transform="translate(2 785)"><rect width="29" height="30" fill="#ffffd8"/><rect x="3" y="3" width="23" height="24" fill="#ffffd8" stroke="#c8c8a0" stroke-width="2"/><rect x="7.500" y="7.500" width="14" height="14" fill="none" stroke="#000"/><path d="M8 8L21 21M8 8H12M8 8V12M21 21H17M21 21V17" stroke="#000" fill="none"/></g>
<g transform="translate(33 785)"><rect width="30" height="30" fill="#ffffd8"/><rect x="3" y="3" width="24" height="24" fill="#ffffd8" stroke="#c8c8a0" stroke-width="2"/><rect x="7.500" y="7.500" width="15" height="15" fill="none" stroke="#000"/><path d="M9 22L20 9M8 21H16M17 19H21" stroke="#000" stroke-width="1.300" fill="none"/></g>
<g transform="translate(65 785)"><rect width="30" height="30" fill="#52a898"/><rect x="3" y="3" width="24" height="24" fill="#ffffd8" stroke="#c8c8a0"/><path d="M8 14L14 8H22V22H8ZM15 8V22M8 15H22" fill="none" stroke="#000"/></g>
<rect x="95" y="783" width="1" height="32" fill="#ffffd8"/>
<rect x="322.500" y="789.500" width="19" height="21" fill="none" stroke="#000"/><path d="M332 793V804M332 806V808" stroke="#000" stroke-width="1.500"/>
</svg>

</body></html>
